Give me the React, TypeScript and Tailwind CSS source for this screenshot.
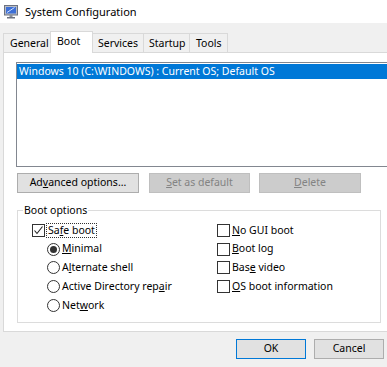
import React from "react";

const FONT = { fontFamily: '"Noto Sans", "Open Sans", Arial, sans-serif' };

function Check({ checked }: { checked?: boolean }) {
  return (
    <div className="w-[13px] h-[13px] border border-[#333333] bg-white flex items-center justify-center shrink-0">
      {checked && (
        <svg width="11" height="11" viewBox="0 0 11 11">
          <path d="M1.5 5.5 L4 8.5 L9.5 1.5" fill="none" stroke="#222" strokeWidth="1.1" />
        </svg>
      )}
    </div>
  );
}

function Radio({ checked }: { checked?: boolean }) {
  return (
    <div className="w-[13px] h-[13px] rounded-full border border-[#333333] bg-white flex items-center justify-center shrink-0">
      {checked && <div className="w-[7px] h-[7px] rounded-full bg-[#333333]" />}
    </div>
  );
}

function Btn({
  children,
  w,
  disabled,
  primary,
}: {
  children: React.ReactNode;
  w: string;
  disabled?: boolean;
  primary?: boolean;
}) {
  const base = "h-[20px] flex items-center justify-center text-[10.5px] border ";
  const cls = disabled
    ? "bg-[#cccccc] border-[#bfbfbf] text-[#838383]"
    : primary
    ? "bg-[#e1e1e1] border-[#0078d7] text-black"
    : "bg-[#e1e1e1] border-[#adadad] text-black";
  return <div className={base + cls + " " + w}>{children}</div>;
}

export default function App() {
  return (
    <div className="w-[387px] h-[367px] bg-[#f0f0f0] overflow-hidden text-black" style={FONT}>
      {/* Title bar */}
      <div className="h-[23px] bg-white flex items-center pl-[4px]">
        <svg width="14" height="14" viewBox="0 0 14 14">
          <rect x="0.5" y="0.5" width="13" height="9.5" fill="#b8bcc4" stroke="#6c7280" />
          <rect x="2" y="2" width="10" height="6.5" fill="#3d6fd6" />
          <path d="M3 7.5 L10.5 2.5" stroke="#cfe0ff" strokeWidth="1" />
          <rect x="5.5" y="10" width="3" height="2" fill="#8a8f99" />
          <rect x="3" y="12" width="8" height="1.5" fill="#6c7280" />
        </svg>
        <span className="ml-[7px] text-[11px] leading-none">System Configuration</span>
      </div>

      {/* Tabs */}
      <div className="flex items-end h-[21px] mt-[8px] pl-[3px] text-[10.5px]">
        <div className="w-[47px] h-[19px] border-l border-t border-[#d9d9d9] bg-[#f0f0f0] pl-[6px] pt-[2px] leading-[15px] whitespace-nowrap">
          General
        </div>
        <div className="relative z-10 w-[43px] h-[22px] -mb-[1px] border-l border-t border-r border-[#d9d9d9] bg-white pl-[6px] pt-[2px] leading-[15px]">
          Boot
        </div>
        <div className="w-[50px] h-[19px] border-t border-[#d9d9d9] bg-[#f0f0f0] pl-[5px] pt-[2px] leading-[15px] whitespace-nowrap">
          Services
        </div>
        <div className="w-[46px] h-[19px] border-l border-t border-[#d9d9d9] bg-[#f0f0f0] pl-[5px] pt-[2px] leading-[15px] whitespace-nowrap">
          Startup
        </div>
        <div className="w-[39px] h-[19px] border-l border-t border-r border-[#d9d9d9] bg-[#f0f0f0] pl-[6px] pt-[2px] leading-[15px]">
          Tools
        </div>
      </div>

      {/* Panel */}
      <div className="ml-[3px] w-[430px] h-[280px] border border-[#d9d9d9] bg-white">
        {/* List */}
        <div className="ml-[12px] mt-[9px] w-[420px] h-[105px] border border-[#828790] bg-white">
          <div className="mt-[1px] h-[15px] bg-[#0078d7] text-white text-[10.5px] leading-[15px] pl-[2px] whitespace-nowrap">
            Windows 10 (C:\WINDOWS) : Current OS; Default OS
          </div>
        </div>

        {/* Buttons row */}
        <div className="flex mt-[6px] ml-[13px]">
          <Btn w="w-[122px]">
            <span>
              Ad<u>v</u>anced options...
            </span>
          </Btn>
          <div className="ml-[10px]">
            <Btn w="w-[101px]" disabled>
              <span>
                <u>S</u>et as default
              </span>
            </Btn>
          </div>
          <div className="ml-[9px]">
            <Btn w="w-[102px]" disabled>
              <span>
                <u>D</u>elete
              </span>
            </Btn>
          </div>
        </div>

        {/* Group box */}
        <div className="relative ml-[13px] mt-[17px] w-[364px] h-[113px] border border-[#dcdcdc]">
          <div className="absolute left-[5px] -top-[9px] bg-white px-[1px] text-[10.5px] leading-[16px]">
            Boot options
          </div>
          <div className="flex pt-[10px] pl-[14px] text-[10.5px]">
            <div className="w-[185px] flex flex-col">
              <div className="h-[18.75px] flex items-center">
                <Check checked />
                <span className="ml-[1px] px-[1px] border border-dotted border-[#333] leading-[13px]">
                  Sa<u>f</u>e boot
                </span>
              </div>
              <div className="h-[18.75px] flex items-center pl-[15px]">
                <Radio checked />
                <span className="ml-[2px]">
                  <u>M</u>inimal
                </span>
              </div>
              <div className="h-[18.75px] flex items-center pl-[15px]">
                <Radio />
                <span className="ml-[2px]">
                  A<u>l</u>ternate shell
                </span>
              </div>
              <div className="h-[18.75px] flex items-center pl-[15px]">
                <Radio />
                <span className="ml-[2px]">
                  Active Directory rep<u>a</u>ir
                </span>
              </div>
              <div className="h-[18.75px] flex items-center pl-[15px]">
                <Radio />
                <span className="ml-[2px]">
                  Net<u>w</u>ork
                </span>
              </div>
            </div>
            <div className="flex flex-col">
              <div className="h-[18.75px] flex items-center">
                <Check />
                <span className="ml-[2px]">
                  <u>N</u>o GUI boot
                </span>
              </div>
              <div className="h-[18.75px] flex items-center">
                <Check />
                <span className="ml-[2px]">
                  <u>B</u>oot log
                </span>
              </div>
              <div className="h-[18.75px] flex items-center">
                <Check />
                <span className="ml-[2px]">
                  Bas<u>e</u> video
                </span>
              </div>
              <div className="h-[18.75px] flex items-center">
                <Check />
                <span className="ml-[2px]">
                  <u>O</u>S boot information
                </span>
              </div>
            </div>
          </div>
        </div>
      </div>

      {/* Bottom buttons */}
      <div className="flex justify-end gap-[8px] pr-[3px] mt-[7px]">
        <Btn w="w-[70px]" primary>
          OK
        </Btn>
        <Btn w="w-[70px]">Cancel</Btn>
      </div>
    </div>
  );
}
